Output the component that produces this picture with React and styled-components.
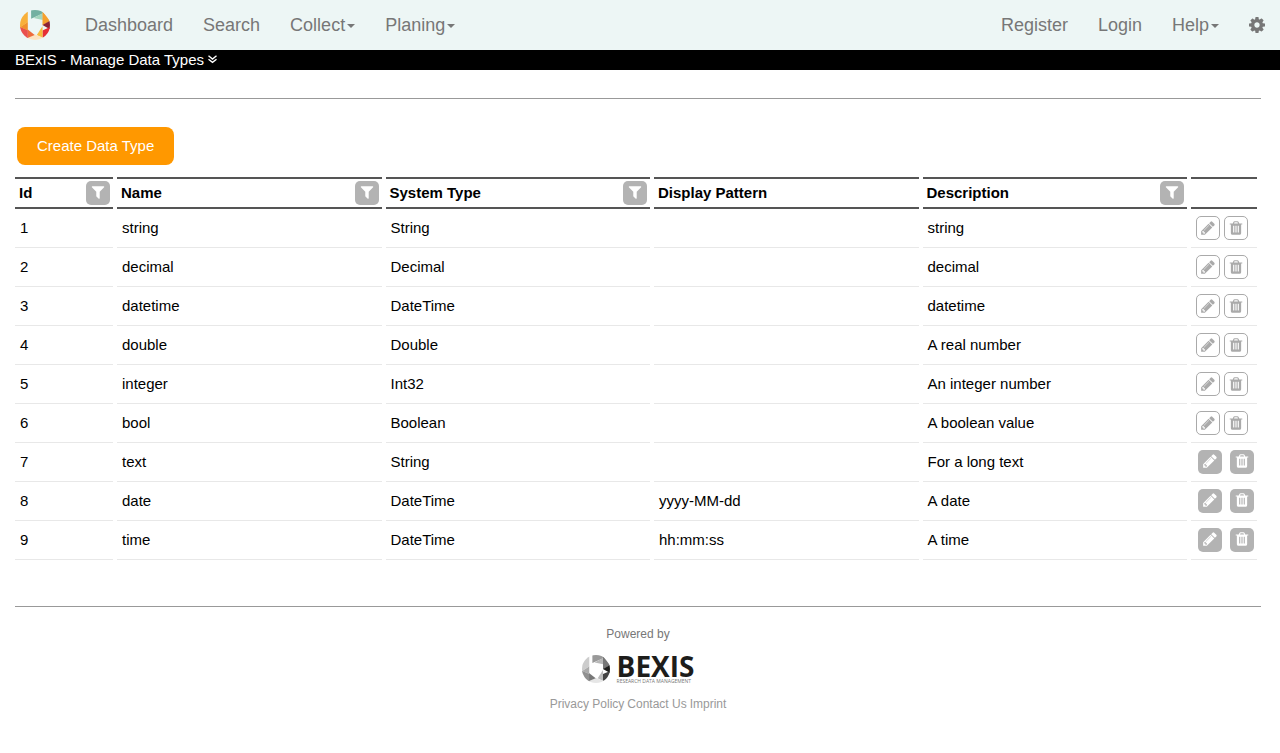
import React from "react";
import styled, { createGlobalStyle, css } from "styled-components";

const GlobalStyle = createGlobalStyle`
  *, *::before, *::after { box-sizing: border-box; }
  body {
    margin: 0;
    background: #fff;
    color: #000;
    font-family: "Liberation Sans", Arial, sans-serif;
    font-size: 15px;
    line-height: 20px;
  }
  a { color: inherit; text-decoration: none; }
`;

const Navbar = styled.nav`
  display: flex;
  justify-content: space-between;
  height: 50px;
  background: #edf6f5;
  color: #777;
  font-size: 18px;
`;

const Brand = styled.a`
  display: flex;
  align-items: center;
  padding: 0 20px;
`;

const NavGroup = styled.div`
  display: flex;
`;

const NavLink = styled.a`
  display: flex;
  align-items: center;
  padding: 0 15px;
`;

const Caret = styled.span`
  margin: 2px 0 0 2px;
  border-top: 4px solid currentColor;
  border-left: 4px solid transparent;
  border-right: 4px solid transparent;
`;

const TitleBar = styled.header`
  display: flex;
  align-items: center;
  gap: 4px;
  height: 20px;
  padding: 0 15px;
  background: #000;
  color: #fff;
`;

const Title = styled.h1`
  margin: 0;
  font-size: 15px;
  font-weight: 400;
`;

const Page = styled.div`
  padding: 28px 19px 0 11px;
`;

const Rule = styled.hr`
  margin: 0 0 0 4px;
  border: 0;
  border-top: 1px solid #999;
`;

const CreateButton = styled.button`
  display: block;
  height: 38px;
  margin: 28px 0 12px 6px;
  padding: 0 20px;
  border: 0;
  border-radius: 8px;
  background: #ff9800;
  color: #fff;
  font: inherit;
`;

const DataTable = styled.table`
  width: 100%;
  margin-bottom: 46px;
  table-layout: fixed;
  border-collapse: separate;
  border-spacing: 4px 0;
`;

const HeadCell = styled.th`
  height: 32px;
  padding: 0 3px 0 4px;
  border: solid #555;
  border-width: 2px 0;
  text-align: left;
  width: ${(p) => p.$width || "auto"};
`;

const HeadContent = styled.div`
  display: flex;
  align-items: center;
  justify-content: space-between;
`;

const Cell = styled.td`
  height: 39px;
  padding: 0 0 0 5px;
  border-bottom: 1px solid #e8e8e8;
`;

const Actions = styled.div`
  display: flex;
  gap: ${(p) => (p.$enabled ? "8px" : "4px")};
  padding-left: ${(p) => (p.$enabled ? "2px" : "0")};
`;

const IconButton = styled.button`
  display: flex;
  flex: none;
  justify-content: center;
  width: 24px;
  height: 24px;
  padding: 3px 0 0;
  border: 0;
  border-radius: 5px;
  background: #b3b3b3;
  color: #fff;
  ${(p) =>
    p.$outlined &&
    css`
      border: 1px solid #aaa;
      background: #fff;
      color: #aaa;
    `}
`;

const Footer = styled.footer`
  display: flex;
  flex-direction: column;
  align-items: center;
  padding: 17px 0 20px 4px;
  color: #777;
  font-size: 12px;
`;

const BexisLogo = styled.a`
  display: flex;
  align-items: center;
  gap: 7px;
  margin: 10px 0;
`;

const Wordmark = styled.span`
  display: flex;
  flex-direction: column;
  color: #1d1d1b;
  font-family: "Open Sans", sans-serif;
`;

const WordmarkName = styled.span`
  font-size: 28px;
  font-weight: 700;
  line-height: 24px;
`;

const WordmarkTagline = styled.span`
  color: #777;
  font-size: 5px;
  line-height: 6px;
`;

const FooterLinks = styled.div`
  display: flex;
  gap: 3px;
  color: #999;
`;

const PATHS = {
  filter:
    "M1595 295q17 41-14 70l-493 493v742q0 42-39 59-13 5-25 5-27 0-45-19l-256-256q-19-19-19-45v-486l-493-493q-31-29-14-70 17-39 59-39h1280q42 0 59 39z",
  pencil:
    "M491 1536l91-91-235-235-91 91v107h128v128h107zm523-928q0-22-22-22-10 0-17 7l-542 542q-7 7-7 17 0 22 22 22 10 0 17-7l542-542q7-7 7-17zm-54-192l416 416-832 832h-416v-416zm683 96q0 53-37 90l-166 166-416-416 166-165q36-38 90-38 53 0 91 38l235 234q37 39 37 91z",
  trash:
    "M704 1376v-704q0-14-9-23t-23-9h-64q-14 0-23 9t-9 23v704q0 14 9 23t23 9h64q14 0 23-9t9-23zm256 0v-704q0-14-9-23t-23-9h-64q-14 0-23 9t-9 23v704q0 14 9 23t23 9h64q14 0 23-9t9-23zm256 0v-704q0-14-9-23t-23-9h-64q-14 0-23 9t-9 23v704q0 14 9 23t23 9h64q14 0 23-9t9-23zm-544-992h448l-48-117q-7-9-17-11h-317q-10 2-17 11zm928 32v64q0 14-9 23t-23 9h-96v948q0 83-47 143.500t-113 60.500h-832q-66 0-113-58.500t-47-141.500v-952h-96q-14 0-23-9t-9-23v-64q0-14 9-23t23-9h309l70-167q15-37 54-63t79-26h320q40 0 79 26t54 63l70 167h309q14 0 23 9t9 23z",
  cog: "M1152 896q0-106-75-181t-181-75-181 75-75 181 75 181 181 75 181-75 75-181zm512-109v222q0 12-8 23t-20 13l-185 28q-19 54-39 91 35 50 107 138 10 12 10 25t-9 23q-27 37-99 108t-94 71q-12 0-26-9l-138-108q-44 23-91 38-16 136-29 186-7 28-36 28h-222q-14 0-24.500-8.500t-11.500-21.500l-28-184q-49-16-90-37l-141 107q-10 9-25 9-14 0-25-11-126-114-165-168-7-10-7-23 0-12 8-23 15-21 51-66.500t54-70.500q-27-50-41-99l-183-27q-13-2-21-12.500t-8-23.500v-222q0-12 8-23t19-13l186-28q14-46 39-92-40-57-107-138-10-12-10-24 0-10 9-23 26-36 98.500-107.500t94.500-71.500q13 0 26 10l138 107q44-23 91-38 16-136 29-186 7-28 36-28h222q14 0 24.500 8.500t11.500 21.500l28 184q49 16 90 37l142-107q9-9 24-9 13 0 25 10 129 119 165 170 7 8 7 22 0 12-8 23-15 21-51 66.500t-54 70.500q26 50 41 98l183 28q13 2 21 12.500t8 23.500z",
};

const Icon = ({ name, viewBox = "0 0 1792 1792" }) => (
  <svg width="16" height="16" viewBox={viewBox} fill="currentColor" aria-hidden="true">
    <path d={PATHS[name]} />
  </svg>
);

const DoubleChevron = () => (
  <svg width="9" height="10" viewBox="0 0 9 10" fill="none" stroke="currentColor" strokeWidth="1.4" aria-hidden="true">
    <path d="M0.500 0.800l4 3.200 4-3.200M0.500 4.200l4 3.200 4-3.200" />
  </svg>
);

const FACETS = [
  "37,0 76,0 76,12 37,29",
  "45,27 76,10 76,33",
  "75,4 100,37 75,51",
  "100,36 100,64 75,50",
  "100,57 100,92 75,92 75,68",
  "75,54 75,93 56,83",
  "26,92 50,82 76,92 76,104 26,104",
  "25,64 49,83 25,93",
  "0,56 26,67 26,96 0,92",
  "0,57 26,40 26,68",
  "0,58 0,0 26,0 26,41",
];
const COLOR_FILLS = [
  "#73b0a1",
  "#a3d5bd",
  "#f6a02d",
  "#8c2236",
  "#e62e35",
  "#f8bb3a",
  "#fde3c0",
  "#ee6b3b",
  "#e9504e",
  "#f0902c",
  "#f8b03a",
];
const GREY_FILLS = ["#999", "#b8b8b8", "#777", "#1d1d1b", "#444", "#bbb", "#e6e6e6", "#777", "#909090", "#aaa", "#ccc"];

const Ring = ({ id, fills, size }) => (
  <svg width={size} height={size} viewBox="0 0 100 100" aria-hidden="true">
    <clipPath id={id}>
      <circle cx="50" cy="50" r="50" />
    </clipPath>
    <g clipPath={`url(#${id})`}>
      {FACETS.map((points, i) => (
        <polygon key={points} points={points} fill={fills[i]} />
      ))}
    </g>
  </svg>
);

const COLUMNS = [
  { label: "Id", filter: true, width: "98px" },
  { label: "Name", filter: true },
  { label: "System Type", filter: true },
  { label: "Display Pattern" },
  { label: "Description", filter: true },
];

const ROWS = [
  [1, "string", "String", "", "string", false],
  [2, "decimal", "Decimal", "", "decimal", false],
  [3, "datetime", "DateTime", "", "datetime", false],
  [4, "double", "Double", "", "A real number", false],
  [5, "integer", "Int32", "", "An integer number", false],
  [6, "bool", "Boolean", "", "A boolean value", false],
  [7, "text", "String", "", "For a long text", true],
  [8, "date", "DateTime", "yyyy-MM-dd", "A date", true],
  [9, "time", "DateTime", "hh:mm:ss", "A time", true],
];

export default function App() {
  return (
    <>
      <GlobalStyle />
      <Navbar>
        <NavGroup>
          <Brand href="#" aria-label="Home">
            <Ring id="brand-ring" fills={COLOR_FILLS} size={30} />
          </Brand>
          <NavLink href="#">Dashboard</NavLink>
          <NavLink href="#">Search</NavLink>
          <NavLink href="#">Collect<Caret /></NavLink>
          <NavLink href="#">Planing<Caret /></NavLink>
        </NavGroup>
        <NavGroup>
          <NavLink href="#">Register</NavLink>
          <NavLink href="#">Login</NavLink>
          <NavLink href="#">Help<Caret /></NavLink>
          <NavLink href="#" aria-label="Settings">
            <Icon name="cog" viewBox="128 128 1536 1536" />
          </NavLink>
        </NavGroup>
      </Navbar>
      <TitleBar>
        <Title>BExIS - Manage Data Types</Title>
        <DoubleChevron />
      </TitleBar>
      <Page>
        <main>
          <Rule />
          <CreateButton type="button">Create Data Type</CreateButton>
          <DataTable>
            <thead>
              <tr>
                {COLUMNS.map((c) => (
                  <HeadCell key={c.label} $width={c.width} scope="col">
                    <HeadContent>
                      {c.label}
                      {c.filter && (
                        <IconButton type="button" aria-label={`Filter ${c.label}`}>
                          <Icon name="filter" />
                        </IconButton>
                      )}
                    </HeadContent>
                  </HeadCell>
                ))}
                <HeadCell $width="66px" />
              </tr>
            </thead>
            <tbody>
              {ROWS.map(([id, name, type, pattern, description, enabled]) => (
                <tr key={id}>
                  <Cell>{id}</Cell>
                  <Cell>{name}</Cell>
                  <Cell>{type}</Cell>
                  <Cell>{pattern}</Cell>
                  <Cell>{description}</Cell>
                  <Cell>
                    <Actions $enabled={enabled}>
                      <IconButton type="button" $outlined={!enabled} disabled={!enabled} aria-label={`Edit ${name}`}>
                        <Icon name="pencil" />
                      </IconButton>
                      <IconButton type="button" $outlined={!enabled} disabled={!enabled} aria-label={`Delete ${name}`}>
                        <Icon name="trash" />
                      </IconButton>
                    </Actions>
                  </Cell>
                </tr>
              ))}
            </tbody>
          </DataTable>
        </main>
        <Rule />
        <Footer>
          <span>Powered by</span>
          <BexisLogo href="#">
            <Ring id="footer-ring" fills={GREY_FILLS} size={28} />
            <Wordmark>
              <WordmarkName>BEXIS</WordmarkName>
              <WordmarkTagline>RESEARCH DATA MANAGEMENT</WordmarkTagline>
            </Wordmark>
          </BexisLogo>
          <FooterLinks>
            <a href="#">Privacy Policy</a>
            <a href="#">Contact Us</a>
            <a href="#">Imprint</a>
          </FooterLinks>
        </Footer>
      </Page>
    </>
  );
}
